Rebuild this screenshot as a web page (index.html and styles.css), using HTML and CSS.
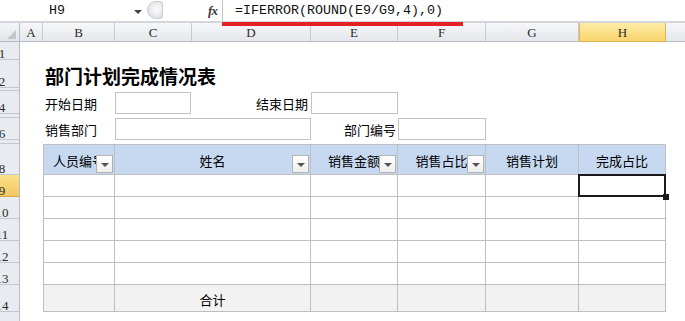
FILE: index.html
```html
<!DOCTYPE html>
<html lang="zh-CN">
<head>
<meta charset="utf-8">
<title>部门计划完成情况表</title>
<link rel="stylesheet" href="styles.css">
</head>
<body>
<div class="fbar">
  <div class="nb">H9</div>
  <div class="nb-dd"><span class="tri"></span></div>
  <div class="grip"></div>
  <div class="fx">fx</div>
  <div class="fin">=IFERROR(ROUND(E9/G9,4),0)</div>
  <div class="redline"></div>
</div>
<div class="sheet">
  <div class="corner"><svg width="20" height="19" viewBox="0 0 20 19"><polygon points="16,7 16,16 7,16" fill="#c3c7cc"/></svg></div>
  <div class="colheads">
    <div class="ch">A</div>
    <div class="ch">B</div>
    <div class="ch">C</div>
    <div class="ch">D</div>
    <div class="ch">E</div>
    <div class="ch">F</div>
    <div class="ch">G</div>
    <div class="ch sel">H</div>
    <div class="ch last"></div>
  </div>
  <div class="rowheads">
    <div class="rh"><span>1</span></div>
    <div class="rh"><span>2</span></div>
    <div class="rh"></div>
    <div class="rh"><span>4</span></div>
    <div class="rh"></div>
    <div class="rh"><span>6</span></div>
    <div class="rh"></div>
    <div class="rh"><span>8</span></div>
    <div class="rh sel"><span>9</span></div>
    <div class="rh"><span>10</span></div>
    <div class="rh"><span>11</span></div>
    <div class="rh"><span>12</span></div>
    <div class="rh"><span>13</span></div>
    <div class="rh"><span>14</span></div>
    <div class="rh"><span>15</span></div>
  </div>
  <div class="cells">
    <div class="title">部门计划完成情况表</div>
    <div class="lbl lbl-start">开始日期</div>
    <div class="box box-start"></div>
    <div class="lbl lbl-end">结束日期</div>
    <div class="box box-end"></div>
    <div class="lbl lbl-dept">销售部门</div>
    <div class="box box-dept"></div>
    <div class="lbl lbl-code">部门编号</div>
    <div class="box box-code"></div>

    <div class="tbl">
      <div class="td th first">人员编号<span class="dd"></span></div>
      <div class="td th">姓名<span class="dd"></span></div>
      <div class="td th">销售金额<span class="dd"></span></div>
      <div class="td th">销售占比<span class="dd"></span></div>
      <div class="td th">销售计划</div>
      <div class="td th">完成占比</div>

      <div class="td first"></div><div class="td"></div><div class="td"></div><div class="td"></div><div class="td"></div><div class="td active"></div>
      <div class="td first"></div><div class="td"></div><div class="td"></div><div class="td"></div><div class="td"></div><div class="td"></div>
      <div class="td first"></div><div class="td"></div><div class="td"></div><div class="td"></div><div class="td"></div><div class="td"></div>
      <div class="td first"></div><div class="td"></div><div class="td"></div><div class="td"></div><div class="td"></div><div class="td"></div>
      <div class="td first"></div><div class="td"></div><div class="td"></div><div class="td"></div><div class="td"></div><div class="td"></div>

      <div class="td tot first"></div>
      <div class="td tot">合计</div>
      <div class="td tot"></div>
      <div class="td tot"></div>
      <div class="td tot"></div>
      <div class="td tot"></div>
    </div>
  </div>
</div>
</body>
</html>
```
FILE: styles.css
```css
* { box-sizing: border-box; }

html, body {
  margin: 0;
  padding: 0;
  width: 685px;
  height: 321px;
  overflow: hidden;
  background: #ffffff;
}

body {
  font-family: "Noto Sans CJK SC", "Noto Sans", sans-serif;
  font-size: 13px;
  color: #000;
  --cols: 23px 72px 77px 119px 87px 88px 93px 87px 1fr;
  --rows: 18px 28px 3px 23px 4px 22px 4px 31px 22px 22px 22px 22px 22px 27px 22px;
}

/* ---------- formula bar ---------- */
.fbar {
  position: relative;
  height: 23px;
  display: flex;
  align-items: stretch;
  background: #ffffff;
  border-bottom: 2px solid #d3d7dc;
}

.nb {
  width: 130px;
  padding-right: 16px;
  display: flex;
  align-items: center;
  justify-content: center;
  font-family: "Liberation Mono", monospace;
  font-size: 13.3px;
  color: #111;
}

.nb-dd {
  width: 16px;
  display: flex;
  align-items: center;
  justify-content: center;
}

.tri {
  width: 0;
  height: 0;
  border-left: 4px solid transparent;
  border-right: 4px solid transparent;
  border-top: 4px solid #444;
  margin-top: 2px;
}

.grip {
  width: 16px;
  height: 18px;
  margin: 1px 0 0 1px;
  border-radius: 9px 3px 3px 9px;
  border: 1px solid #c9cdd2;
  background: radial-gradient(circle at 60% 45%, #fafafa 0, #eceef0 45%, #cfd3d8 100%);
}

.fx {
  margin-left: 40px;
  width: 19px;
  display: flex;
  align-items: center;
  justify-content: center;
  font-family: "Liberation Serif", serif;
  font-style: italic;
  font-weight: bold;
  font-size: 13px;
  color: #3a3a3a;
  letter-spacing: -1px;
}

.fin {
  flex: 1;
  border-left: 1px solid #c2c7cd;
  padding-left: 12px;
  display: flex;
  align-items: center;
  font-family: "Liberation Mono", monospace;
  font-size: 13.33px;
  color: #111;
}

.redline {
  position: absolute;
  left: 222px;
  top: 22px;
  width: 241px;
  height: 4px;
  background: #e41f26;
  z-index: 5;
}

/* ---------- sheet ---------- */
.sheet {
  display: grid;
  grid-template-columns: 20px 1fr;
  grid-template-rows: 19px 1fr;
}

.corner {
  background: linear-gradient(#f3f4f6, #e3e6ea);
  border-right: 1px solid #b6bcc4;
  border-bottom: 1px solid #b6bcc4;
}

.corner svg { display: block; }

.colheads {
  display: grid;
  grid-template-columns: var(--cols);
  background: linear-gradient(#f6f7f9, #e4e7eb);
  border-bottom: 1px solid #b6bcc4;
}

.ch {
  border-right: 1px solid #c5cad0;
  display: flex;
  align-items: center;
  justify-content: center;
  font-family: "Liberation Serif", serif;
  font-size: 13px;
  color: #2b2b2b;
  padding-top: 2px;
}

.ch.last { border-right: none; }

.ch.sel {
  background: linear-gradient(#fdeca6, #f8d46c);
  border: 1px solid #e2b556;
  border-top: none;
  margin-bottom: -1px;
}

.rowheads {
  display: grid;
  grid-template-rows: var(--rows);
  background: #e8ebef;
  border-right: 1px solid #b6bcc4;
}

.rh {
  border-bottom: 1px solid #c3c8cf;
  overflow: hidden;
  display: flex;
  align-items: flex-end;
  line-height: 14px;
}

.rh span {
  display: inline-block;
  width: 40px;
  margin-left: -15px;
  margin-bottom: -2px;
  text-align: center;
  font-family: "Liberation Serif", serif;
  font-size: 13px;
  color: #2b2b2b;
}

.rh.sel {
  background: linear-gradient(#fbe08a, #f3c861);
  border-bottom: 1px solid #dba945;
}

.cells {
  display: grid;
  grid-template-columns: var(--cols);
  grid-template-rows: var(--rows);
}

.title {
  grid-column: 2 / 7;
  grid-row: 2;
  align-self: center;
  padding-left: 2px;
  padding-top: 3px;
  font-size: 19px;
  font-weight: bold;
  line-height: 22px;
  white-space: nowrap;
}

.lbl {
  display: flex;
  align-items: center;
  white-space: nowrap;
}

.lbl-start { grid-column: 2; grid-row: 4; padding-left: 2px; padding-top: 1px; }
.lbl-end   { grid-column: 4; grid-row: 4; justify-content: flex-end; padding-right: 3px; padding-top: 1px; }
.lbl-dept  { grid-column: 2; grid-row: 6; padding-left: 2px; }
.lbl-code  { grid-column: 5; grid-row: 6; justify-content: flex-end; padding-right: 2px; }

.box { border: 1px solid #c3c3c3; margin-top: 1px; }
.box-start { grid-column: 3; grid-row: 4; margin-right: 1px; }
.box-end   { grid-column: 5; grid-row: 4; }
.box-dept  { grid-column: 3 / 5; grid-row: 6; margin-top: 0; }
.box-code  { grid-column: 6; grid-row: 6; margin-top: 0; }

/* ---------- table ---------- */
.tbl {
  grid-column: 2 / 9;
  grid-row: 8 / 15;
  display: grid;
  grid-template-columns: 72px 196px 87px 88px 93px 87px;
  grid-template-rows: 31px repeat(5, 22px) 27px;
}

.td {
  position: relative;
  border-right: 1px solid #bfbfbf;
  border-bottom: 1px solid #bfbfbf;
  display: flex;
  align-items: center;
  justify-content: center;
  white-space: nowrap;
}

.td.first { border-left: 1px solid #bfbfbf; }

.th {
  background: #c6d9f0;
  border-top: 1px solid #bfbfbf;
  padding-top: 1px;
}

.tot {
  background: #f2f2f2;
  padding-top: 2px;
}

.dd {
  position: absolute;
  right: 1px;
  bottom: 1px;
  width: 17px;
  height: 18px;
  border: 1px solid #b3b3b3;
  background: linear-gradient(#ffffff, #eeeeee);
}

.dd::after {
  content: "";
  position: absolute;
  left: 4px;
  top: 7px;
  width: 0;
  height: 0;
  border-left: 4px solid transparent;
  border-right: 4px solid transparent;
  border-top: 4px solid #555;
}

.active::after {
  content: "";
  position: absolute;
  left: -1px;
  top: -1px;
  right: -1px;
  bottom: -1px;
  border: 2px solid #1b1b1b;
  z-index: 2;
}

.active::before {
  content: "";
  position: absolute;
  right: -4px;
  bottom: -4px;
  width: 6px;
  height: 6px;
  background: #1b1b1b;
  z-index: 3;
}
```
